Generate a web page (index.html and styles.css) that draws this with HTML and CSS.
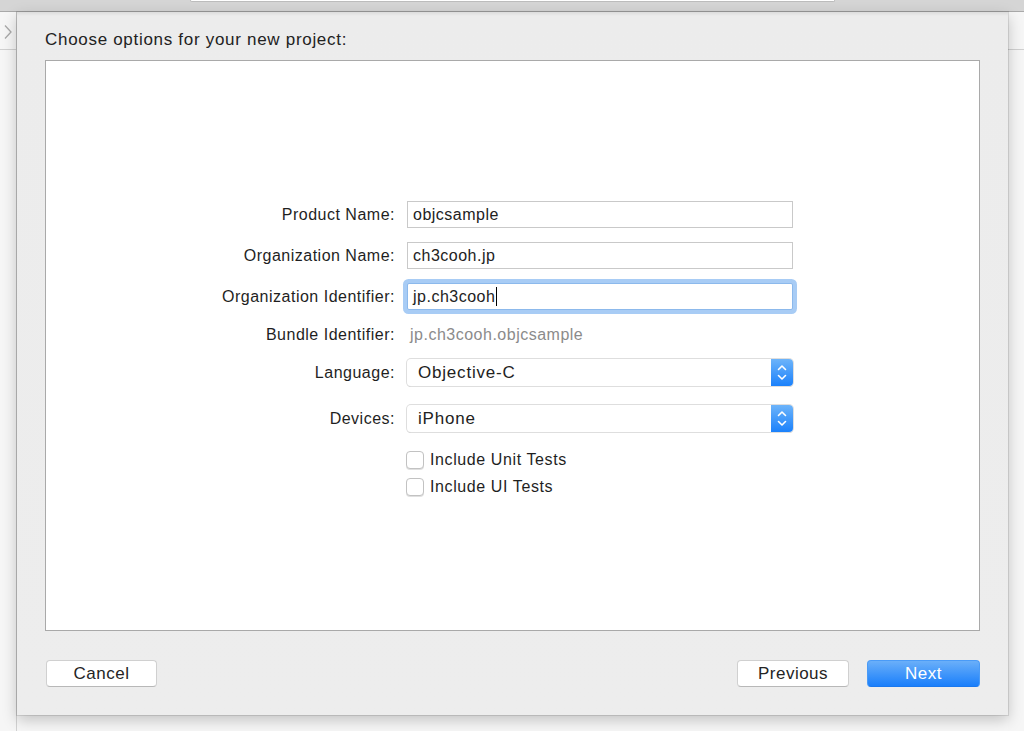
FILE: index.html
```html
<!DOCTYPE html>
<html lang="en">
<head>
  <meta charset="UTF-8" />
  <meta name="viewport" content="width=device-width, initial-scale=1.0"/>
  <title>Choose options for your new project</title>
  <link rel="stylesheet" href="styles.css">
</head>
<body>

  <div class="toolbar">
    <div class="activity"></div>
  </div>

  <div class="workspace">
    <aside class="navigator">
      <div class="panel-head">
        <svg class="chevron" width="10" height="16" viewBox="0 0 10 16">
          <path d="M2 1.5 L8 8 L2 14.5" fill="none" stroke="#a9a9a9" stroke-width="1.3"/>
        </svg>
      </div>
    </aside>

    <div class="sheet">
      <h1>Choose options for your new project:</h1>

      <div class="options">
        <div class="fields">
          <div class="row">
            <label>Product Name:</label>
            <div class="text-field">objcsample</div>
          </div>

          <div class="row">
            <label>Organization Name:</label>
            <div class="text-field">ch3cooh.jp</div>
          </div>

          <div class="row">
            <label>Organization Identifier:</label>
            <div class="text-field focused">jp.ch3cooh<span class="caret"></span></div>
          </div>

          <div class="row row-static">
            <label>Bundle Identifier:</label>
            <div class="static-value">jp.ch3cooh.objcsample</div>
          </div>

          <div class="row">
            <label>Language:</label>
            <div class="popup">
              <span class="popup-value">Objective-C</span>
              <span class="popup-arrows">
                <svg width="22" height="27" viewBox="0 0 22 27">
                  <path d="M7.5 10.5 L11 7 L14.5 10.5 M7.5 16.5 L11 20 L14.5 16.5" fill="none" stroke="#fff" stroke-width="1.6" stroke-linecap="round" stroke-linejoin="round"/>
                </svg>
              </span>
            </div>
          </div>

          <div class="row row-devices">
            <label>Devices:</label>
            <div class="popup">
              <span class="popup-value">iPhone</span>
              <span class="popup-arrows">
                <svg width="22" height="27" viewBox="0 0 22 27">
                  <path d="M7.5 10.5 L11 7 L14.5 10.5 M7.5 16.5 L11 20 L14.5 16.5" fill="none" stroke="#fff" stroke-width="1.6" stroke-linecap="round" stroke-linejoin="round"/>
                </svg>
              </span>
            </div>
          </div>

          <div class="checks">
            <div class="check"><span class="box"></span>Include Unit Tests</div>
            <div class="check"><span class="box"></span>Include UI Tests</div>
          </div>
        </div>
      </div>

      <div class="actions">
        <button class="btn">Cancel</button>
        <button class="btn btn-previous">Previous</button>
        <button class="btn btn-primary">Next</button>
      </div>
    </div>

    <aside class="inspector">
      <div class="panel-head"></div>
    </aside>
  </div>

</body>
</html>
```

FILE: styles.css
```css
* {
  margin: 0;
  padding: 0;
  box-sizing: border-box;
}

body, html {
  height: 100%;
  overflow: hidden;
}

body {
  background: #f7f7f7;
  font-family: 'Liberation Sans', Arial, sans-serif;
  color: #242424;
}

/* window toolbar, only its lower edge shows */
.toolbar {
  height: 12px;
  background: #d5d5d5;
  border-bottom: 1px solid #a9a9a9;
}

.activity {
  margin-left: 190px;
  width: 645px;
  height: 2px;
  background: #fff;
  border: 1px solid #bcbcbc;
  border-top: none;
  border-radius: 0 0 4px 4px;
}

.workspace {
  display: flex;
  align-items: flex-start;
  height: 719px;
}

.navigator {
  width: 17px;
  align-self: stretch;
  background: #f6f6f6;
  border-right: 1px solid #d2d2d2;
}

.panel-head {
  height: 38px;
  border-bottom: 1px solid #d0d0d0;
  display: flex;
  align-items: center;
  justify-content: center;
}

.chevron {
  margin-top: 2px;
}

.inspector {
  flex: 1;
  align-self: stretch;
  background: #f6f6f6;
}

/* the sheet */
.sheet {
  position: relative;
  z-index: 1;
  width: 991px;
  height: 703px;
  padding: 17px 28px 0;
  background: linear-gradient(#dcdcdc, #ececec 4px, #ededed);
  box-shadow: 0 0 0 1px rgba(0,0,0,0.1), 0 5px 14px rgba(0,0,0,0.22);
}

.sheet h1 {
  font-size: 17px;
  font-weight: normal;
  letter-spacing: 0.7px;
  line-height: 22px;
  margin-bottom: 9px;
  color: #222;
}

.options {
  height: 571px;
  background: #fff;
  border: 1px solid #a9a9a9;
  padding-top: 140px;
}

.fields {
  display: flex;
  flex-direction: column;
  gap: 14px;
}

.row {
  display: grid;
  grid-template-columns: 349px 386px;
  column-gap: 12px;
  align-items: center;
}

.row label {
  text-align: right;
  font-size: 16px;
  letter-spacing: 0.5px;
  color: #1f1f1f;
}

.text-field {
  height: 27px;
  line-height: 26px;
  padding: 0 5px;
  background: #fff;
  border: 1px solid #c9c9c9;
  font-size: 16px;
  letter-spacing: 0.5px;
  color: #222;
}

.text-field.focused {
  border-color: #8cb9ec;
  border-radius: 2px;
  box-shadow: 0 0 0 4px #a8ccf5;
}

.caret {
  display: inline-block;
  width: 1px;
  height: 19px;
  margin-left: 1px;
  background: #000;
  vertical-align: -4px;
}

.row-static {
  height: 21px;
}

.static-value {
  padding-left: 3px;
  font-size: 16px;
  letter-spacing: 0.5px;
  color: #8b8b8b;
}

.row-devices {
  margin-top: 5px;
}

.popup {
  display: flex;
  height: 27px;
  background: #fff;
  border-radius: 4px;
  box-shadow: 0 0 0 1px #dedede, 0 1px 0 #c4c4c4;
}

.popup-value {
  flex: 1;
  padding-left: 11px;
  line-height: 28px;
  font-size: 17px;
  letter-spacing: 0.8px;
  color: #222;
}

.popup-arrows {
  width: 22px;
  border-radius: 0 4px 4px 0;
  background: linear-gradient(#6db4fa, #1b81fb);
}

.popup-arrows svg {
  display: block;
}

.checks {
  margin-top: 5px;
  margin-left: 360px;
  display: flex;
  flex-direction: column;
  gap: 9px;
}

.check {
  display: flex;
  align-items: center;
  gap: 6px;
  height: 18px;
  font-size: 16px;
  letter-spacing: 0.6px;
  color: #1f1f1f;
}

.check .box {
  width: 18px;
  height: 18px;
  background: #fff;
  border: 1px solid #c2c2c2;
  border-radius: 4px;
  box-shadow: 0 1px 0 #e0e0e0;
}

/* bottom buttons */
.actions {
  display: flex;
  gap: 18px;
  padding: 29px 0 0 1px;
}

.btn {
  width: 111px;
  height: 27px;
  font-family: 'Liberation Sans', Arial, sans-serif;
  font-size: 17px;
  letter-spacing: 0.5px;
  color: #242424;
  background: #fff;
  border: 1px solid #d0d0d0;
  border-bottom-color: #b8b8b8;
  border-radius: 4px;
  cursor: pointer;
}

.btn-previous {
  margin-left: auto;
  width: 112px;
}

.btn-primary {
  width: 113px;
  color: #fff;
  border-color: #4a9bf7;
  border-bottom-color: #1a78ee;
  background: linear-gradient(#6aaff9, #1a7ffb);
}
```
